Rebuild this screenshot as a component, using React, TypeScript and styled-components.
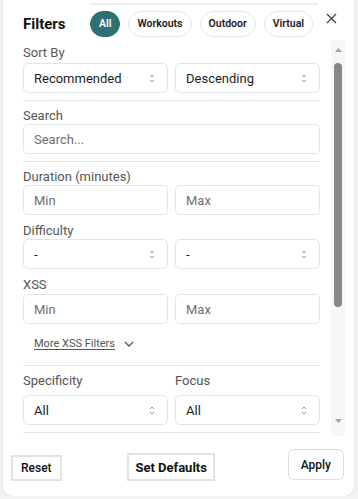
import React from 'react';
import styled, { createGlobalStyle } from 'styled-components';

const GlobalStyle = createGlobalStyle`
    html, body {
        margin: 0;
        padding: 0;
        background: #f3f4f4;
        font-family: Roboto, "Noto Sans", "Liberation Sans", sans-serif;
    }
`;

const Card = styled.div`
    box-sizing: border-box;
    margin-left: 3px;
    width: 351px;
    height: 496px;
    background: #fff;
    border-radius: 0 0 10px 10px;
    box-shadow: 0 0 0 1px #e7e9e9, 0 2px 6px rgba(0, 0, 0, 0.04);
    display: flex;
    flex-direction: column;
    overflow: hidden;
`;

const Header = styled.div`
    display: flex;
    align-items: flex-start;
    padding: 0 16px 0 20px;
    height: 40px;
    flex-shrink: 0;
`;

const Title = styled.h2`
    margin: 11px 0 0 0;
    min-width: 67px;
    font-size: 15px;
    line-height: 26px;
    font-weight: 700;
    color: #111;
`;

const TabsColumn = styled.div`
    display: flex;
    flex-direction: column;
`;

const TabsTrack = styled.div`
    margin: 3px 0 6px -1px;
    width: 229px;
    height: 2px;
    background: #e9eeee;
    border-radius: 1px;
`;

const Tabs = styled.div`
    display: flex;
    gap: 8px;
`;

const Tab = styled.button<{ $active?: boolean }>`
    height: 26px;
    padding: 0 8px;
    border-radius: 13px;
    border: 1px solid ${p => (p.$active ? '#2f7072' : '#e1e8e8')};
    background: ${p => (p.$active ? '#2f7072' : '#fff')};
    color: ${p => (p.$active ? '#fff' : '#1a1a1a')};
    font-family: inherit;
    font-size: 10.5px;
    font-weight: 600;
    line-height: 1;
    white-space: nowrap;
    cursor: pointer;
`;

const CloseButton = styled.button`
    margin: 11px 0 0 auto;
    width: 14px;
    height: 14px;
    padding: 0;
    border: 0;
    background: none;
    display: flex;
    align-items: center;
    justify-content: center;
    cursor: pointer;
`;

const Body = styled.div`
    flex: 1;
    min-height: 0;
    display: flex;
    margin: 0 9px 0 20px;
`;

const Content = styled.div`
    flex: 1;
    min-width: 0;
    overflow: hidden;
    padding-right: 11px;
`;

const Rail = styled.div`
    width: 14px;
    flex-shrink: 0;
    background: #f7f7f7;
    display: flex;
    flex-direction: column;
    align-items: center;
`;

const RailArrow = styled.div<{ $down?: boolean }>`
    height: 17px;
    flex-shrink: 0;
    display: flex;
    align-items: ${p => (p.$down ? 'flex-start' : 'flex-end')};
    justify-content: center;
    padding-bottom: 5px;
    box-sizing: border-box;
`;

const RailTrough = styled.div`
    flex: 1;
    width: 8px;
    padding-top: 6px;
    display: flex;
    flex-direction: column;
`;

const Thumb = styled.div`
    height: 244px;
    border-radius: 4px;
    background: #878787;
`;

const Section = styled.div<{ $first?: boolean; $last?: boolean }>`
    display: flex;
    flex-direction: column;
    gap: 8px;
    padding: ${p => (p.$first ? '5px' : '7px')} 0 ${p => (p.$last ? '13px' : '7px')};
    border-bottom: 1px solid #e4e9e9;
`;

const Field = styled.div<{ $gap?: number }>`
    display: flex;
    flex-direction: column;
    gap: ${p => p.$gap ?? 0}px;
`;

const Label = styled.div`
    font-size: 13px;
    line-height: 16px;
    color: #555;
`;

const Row = styled.div`
    display: grid;
    grid-template-columns: 1fr 1fr;
    column-gap: 7px;
`;

const Box = styled.div`
    box-sizing: border-box;
    height: 30px;
    border: 1px solid #e1e7e7;
    border-radius: 5px;
    background: #fff;
    display: flex;
    align-items: center;
    padding: 0 12px 0 10px;
    font-size: 13px;
`;

const SelectText = styled.span`
    flex: 1;
    color: #1d1d1d;
`;

const Placeholder = styled.span`
    color: #6f6f6f;
`;

const MoreLink = styled.button`
    align-self: flex-start;
    margin: 4px 0 0 11px;
    padding: 0;
    border: 0;
    background: none;
    display: flex;
    align-items: center;
    gap: 9px;
    font-family: inherit;
    font-size: 11px;
    line-height: 16px;
    color: #555;
    cursor: pointer;
`;

const MoreText = styled.span`
    text-decoration: underline;
    text-underline-offset: 2px;
`;

const Footer = styled.div`
    flex-shrink: 0;
    height: 60px;
    display: flex;
    align-items: flex-end;
    justify-content: space-between;
    padding: 0 10px 15px 8px;
    box-sizing: border-box;
`;

const PlainButton = styled.button<{ $bold?: boolean }>`
    display: inline-flex;
    align-items: center;
    justify-content: center;
    height: ${p => (p.$bold ? '28px' : '26px')};
    margin-right: ${p => (p.$bold ? '7px' : '0')};
    padding: 0 ${p => (p.$bold ? '6px' : '8px')};
    border: 2px solid #e2e2e2;
    border-radius: 0;
    background: #fff;
    font-family: inherit;
    font-size: ${p => (p.$bold ? '13px' : '12px')};
    font-weight: ${p => (p.$bold ? 700 : 500)};
    line-height: 1;
    color: #111;
    cursor: pointer;
`;

const ApplyButton = styled.button`
    display: inline-flex;
    align-items: center;
    height: 31px;
    margin: 0 0 1px 0;
    padding: 0 12px;
    border: 1px solid #dedede;
    border-radius: 6px;
    background: #fff;
    font-family: inherit;
    font-size: 12px;
    font-weight: 500;
    line-height: 1;
    color: #111;
    cursor: pointer;
`;

const UpDown = () => (
    <svg width="6" height="9" viewBox="0 0 6 9" fill="none" stroke="#8a8a8a" strokeWidth="0.9">
        <path d="M1 3 L3 1 L5 3" />
        <path d="M1 6 L3 8 L5 6" />
    </svg>
);

const Select: React.FC<{ value: string }> = ({ value }) => (
    <Box>
        <SelectText>{value}</SelectText>
        <UpDown />
    </Box>
);

const Input: React.FC<{ placeholder: string }> = ({ placeholder }) => (
    <Box>
        <Placeholder>{placeholder}</Placeholder>
    </Box>
);

const Triangle: React.FC<{ down?: boolean }> = ({ down }) => (
    <svg width="7" height="4" viewBox="0 0 7 4" fill="#a3a3a3">
        {down ? <path d="M0 0 H7 L3.5 4 Z" /> : <path d="M0 4 H7 L3.5 0 Z" />}
    </svg>
);

const tabs = ['All', 'Workouts', 'Outdoor', 'Virtual'];

export default function App() {
    return (
        <>
            <GlobalStyle />
            <Card>
                <Header>
                    <Title>Filters</Title>
                    <TabsColumn>
                        <TabsTrack />
                        <Tabs>
                            {tabs.map((t, i) => (
                                <Tab key={t} $active={i === 0}>{t}</Tab>
                            ))}
                        </Tabs>
                    </TabsColumn>
                    <CloseButton aria-label="Close">
                        <svg width="11" height="11" viewBox="0 0 11 11" stroke="#444" strokeWidth="1.3">
                            <path d="M1 1 L10 10 M10 1 L1 10" />
                        </svg>
                    </CloseButton>
                </Header>
                <Body>
                    <Content>
                        <Section $first>
                            <Field $gap={2}>
                                <Label>Sort By</Label>
                                <Row>
                                    <Select value="Recommended" />
                                    <Select value="Descending" />
                                </Row>
                            </Field>
                        </Section>
                        <Section>
                            <Field>
                                <Label>Search</Label>
                                <Input placeholder="Search..." />
                            </Field>
                        </Section>
                        <Section $last>
                            <Field>
                                <Label>Duration (minutes)</Label>
                                <Row>
                                    <Input placeholder="Min" />
                                    <Input placeholder="Max" />
                                </Row>
                            </Field>
                            <Field>
                                <Label>Difficulty</Label>
                                <Row>
                                    <Select value="-" />
                                    <Select value="-" />
                                </Row>
                            </Field>
                            <Field $gap={1}>
                                <Label>XSS</Label>
                                <Row>
                                    <Input placeholder="Min" />
                                    <Input placeholder="Max" />
                                </Row>
                            </Field>
                            <MoreLink>
                                <MoreText>More XSS Filters</MoreText>
                                <svg width="10" height="6" viewBox="0 0 10 6" fill="none" stroke="#555" strokeWidth="1.3">
                                    <path d="M1 1 L5 5 L9 1" />
                                </svg>
                            </MoreLink>
                        </Section>
                        <Section>
                            <Row>
                                <Field $gap={6}>
                                    <Label>Specificity</Label>
                                    <Select value="All" />
                                </Field>
                                <Field $gap={6}>
                                    <Label>Focus</Label>
                                    <Select value="All" />
                                </Field>
                            </Row>
                        </Section>
                    </Content>
                    <Rail>
                        <RailArrow><Triangle /></RailArrow>
                        <RailTrough><Thumb /></RailTrough>
                        <RailArrow $down><Triangle down /></RailArrow>
                    </Rail>
                </Body>
                <Footer>
                    <PlainButton>Reset</PlainButton>
                    <PlainButton $bold>Set Defaults</PlainButton>
                    <ApplyButton>Apply</ApplyButton>
                </Footer>
            </Card>
        </>
    );
}
